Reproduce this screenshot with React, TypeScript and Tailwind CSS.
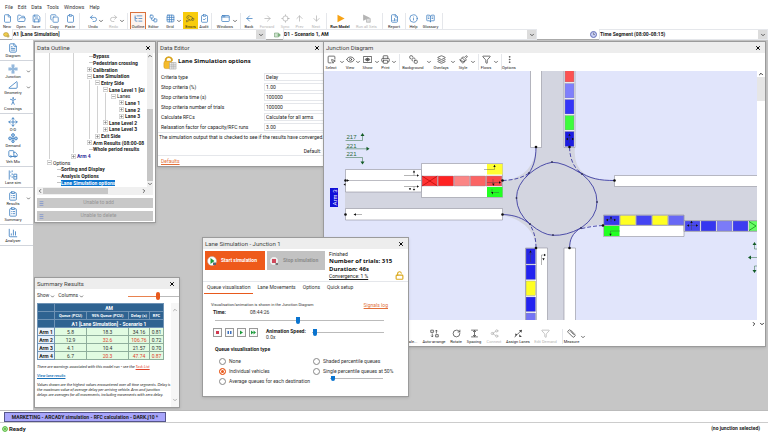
import { useState } from 'react';
import type { ReactNode } from 'react';
import {
  AppWindow, ArrowDown, ArrowLeft, ArrowRight, ArrowUp, BookOpenText, ChartColumn, ChevronDown, ChevronLeft,
  ChevronRight, ChevronUp, ClipboardCheck, ClipboardList, Clipboard, Copy, Eye, FileText, File, Filter, FolderOpen,
  Grid3x3, Info, Layers, ListTree, Locate, LockOpen, Paintbrush, Printer, Redo2, RotateCw, Ruler,
  Save, Share2, SquareMousePointer, SquareStack, TriangleRight, Truck, Undo2, X, EllipsisVertical,
  Cctv, FileChartColumn, PersonStanding, Move, Workflow,
} from 'lucide-react';

type Icon = React.ComponentType<{ className?: string; strokeWidth?: number }>;

interface Tool {
  label: string;
  icon: Icon;
  w: string;
  color?: string;
  chevron?: boolean;
  sep?: boolean;
  off?: boolean;
  box?: string;
  bold?: boolean;
}

const RunIcon: Icon = ({ className }) => (
  <svg viewBox="0 0 24 24" className={className}><path d="M4 2 23 12 4 22Z" fill="currentColor" /></svg>
);

const RunAllIcon: Icon = ({ className }) => (
  <svg viewBox="0 0 24 24" className={className}>
    <path d="M3 1 21 10 3 18Z" fill="currentColor" />
    <path d="M12 12h10v10H12z" fill="#ddd" stroke="currentColor" strokeWidth="2" />
  </svg>
);

const ShowIcon: Icon = ({ className }) => (
  <svg viewBox="0 0 24 24" className={className} fill="none" stroke="currentColor" strokeWidth="2">
    <path d="M1 4h22v16H1zM5 12q7-8 14 0q-7 8-14 0z" />
    <circle cx="12" cy="12" r="2.500" fill="currentColor" />
  </svg>
);

const SpacingIcon: Icon = ({ className }) => (
  <svg viewBox="0 0 24 24" className={className} fill="none" stroke="currentColor" strokeWidth="2">
    <path d="M3 3h18M3 21h18M12 4v16M8 8l4-4 4 4M8 16l4 4 4-4" />
  </svg>
);

const ArrangeIcon: Icon = ({ className }) => (
  <svg viewBox="0 0 24 24" className={className} fill="none" stroke="currentColor" strokeWidth="2">
    <path d="M2 3h7v6H2zM15 15h7v6h-7zM17 12V3M14 6l3-3 3 3M6 12v9M3 18l3 3 3-3" />
  </svg>
);

const AssignIcon: Icon = ({ className }) => (
  <svg viewBox="0 0 24 24" className={className} fill="none" stroke="currentColor" strokeWidth="2">
    <path d="M2 22C6 14 12 14 20 3" />
    <path d="M13 4l8-2-1 8zM14 14l7 7h-7zM3 12l6 2-5 5z" fill="currentColor" stroke="none" />
  </svg>
);

const JunctionIcon: Icon = ({ className }) => (
  <svg viewBox="0 0 24 24" className={className} fill="none" stroke="currentColor" strokeWidth="2">
    <circle cx="12" cy="12" r="3" />
    <path d="M10 8V1M14 8V1M10 16v7M14 16v7M8 10H1M8 14H1M16 10h7M16 14h7" />
  </svg>
);

const DemandIcon: Icon = ({ className }) => (
  <svg viewBox="0 0 24 24" className={className} fill="#a9cbec" stroke="currentColor" strokeWidth="2">
    <circle cx="12" cy="5" r="3.500" /><circle cx="5" cy="13" r="3.500" /><circle cx="19" cy="13" r="3.500" /><circle cx="12" cy="20" r="3" />
    <path d="M12 9v8M8 13h8" />
  </svg>
);

const LaneSimIcon: Icon = ({ className }) => (
  <svg viewBox="0 0 24 24" className={className} fill="none" stroke="currentColor" strokeWidth="2">
    <path d="M3 23V1M10 1v4M10 8v4M10 15v4M14 10h7v12h-7zM14 16h7" />
    <path d="M5 3h3v4H5zM5 12h3v4H5z" fill="#a9cbec" stroke="none" />
  </svg>
);

const NoIcon: Icon = ({ className }) => <span className={className} />;

const mainTools: Tool[] = [
  { label: 'New', icon: File, w: 'w-3.5' },
  { label: 'Open', icon: FolderOpen, w: 'w-3.5' },
  { label: 'Save', icon: Save, w: 'w-4', sep: true },
  { label: 'Copy', icon: Copy, w: 'w-[15px]' },
  { label: 'Paste', icon: Clipboard, w: 'w-4', sep: true },
  { label: 'Undo', icon: Undo2, w: 'ml-2 w-2', chevron: true },
  { label: 'Redo', icon: Redo2, w: 'ml-1 w-[9px]', chevron: true, sep: true, off: true },
  { label: 'Outline', icon: ListTree, w: 'ml-px w-4', box: 'border border-[#d9713c] bg-[#fdf3ee]' },
  { label: 'Editor', icon: Workflow, w: 'w-[15px]' },
  { label: 'Grid', icon: Grid3x3, w: 'ml-1 w-2.5', chevron: true },
  { label: 'Errors', icon: Cctv, w: 'w-[15px]', color: 'text-[#6b6436]', box: 'bg-[#f8cc0c]' },
  { label: 'Audit', icon: ClipboardCheck, w: 'w-3', sep: true },
  { label: 'Windows', icon: AppWindow, w: 'ml-1.5 w-3', chevron: true, sep: true },
  { label: 'Back', icon: ArrowLeft, w: 'w-3.5' },
  { label: 'Forward', icon: ArrowRight, w: 'w-[22px]', off: true },
  { label: 'Sync', icon: Locate, w: 'w-3.5', off: true },
  { label: 'Prev', icon: ArrowUp, w: 'w-[15px]', off: true },
  { label: 'Next', icon: ArrowDown, w: 'w-[18px]', off: true, sep: true },
  { label: 'Run Model', icon: RunIcon, w: 'w-6', color: 'text-[#f7a316]', bold: true },
  { label: 'Run all Sets', icon: RunAllIcon, w: 'w-[29px]', off: true, sep: true },
  { label: 'Report', icon: FileChartColumn, w: 'w-5', sep: true },
  { label: 'Help', icon: Info, w: 'w-[13px]' },
  { label: 'Glossary', icon: BookOpenText, w: 'w-[21px]', sep: true },
];

const diagramTools: Tool[] = [
  { label: 'Select', icon: SquareMousePointer, w: 'w-3.5', chevron: true },
  { label: 'View', icon: Eye, w: 'w-2', chevron: true },
  { label: 'Show', icon: ShowIcon, w: 'w-[11px]', chevron: true },
  { label: 'Print', icon: Printer, w: 'w-[9px]', chevron: true, sep: true },
  { label: 'Background', icon: SquareStack, w: 'w-6', chevron: true },
  { label: 'Overlays', icon: Layers, w: 'w-4', chevron: true },
  { label: 'Style', icon: Paintbrush, w: 'w-3', chevron: true, sep: true },
  { label: 'Flows', icon: Filter, w: 'w-3', chevron: true, sep: true },
  { label: 'Options', icon: EllipsisVertical, w: 'w-3' },
];

const arrangeTools: Tool[] = [
  { label: 'Change Scale...', icon: NoIcon, w: 'w-[37px]' },
  { label: 'Auto-arrange', icon: ArrangeIcon, w: 'w-6' },
  { label: 'Rotate', icon: RotateCw, w: 'w-5' },
  { label: 'Spacing', icon: SpacingIcon, w: 'w-4' },
  { label: 'Connect', icon: Share2, w: 'w-6', off: true },
  { label: 'Assign Lanes', icon: AssignIcon, w: 'w-6' },
  { label: 'Edit Demand', icon: Filter, w: 'w-[31px]', off: true, sep: true },
  { label: 'Measure', icon: Ruler, w: 'w-[15px]', chevron: true },
];

const sideSections: { label: string; icon: Icon; chevron?: boolean }[][] = [
  [{ label: 'Diagram', icon: FileText }],
  [
    { label: 'Junction', icon: JunctionIcon, chevron: true },
    { label: 'Geometry', icon: TriangleRight, chevron: true },
    { label: 'Crossings', icon: PersonStanding },
  ],
  [
    { label: 'O-D', icon: Move },
    { label: 'Demand', icon: DemandIcon },
    { label: 'Veh Mix', icon: Truck },
  ],
  [{ label: 'Lane sim', icon: LaneSimIcon }],
  [
    { label: 'Results', icon: ClipboardList, chevron: true },
    { label: 'Summary', icon: ClipboardList },
  ],
  [{ label: 'Analyser', icon: ChartColumn }],
];

// guides: one character per indent level, "|" continues a branch line
const tree: { guides: string; node: '+' | '-' | 'L'; label: string; look?: string }[] = [
  { guides: '|  | ', node: 'L', label: 'Bypass' },
  { guides: '|  | ', node: 'L', label: 'Pedestrian crossing' },
  { guides: '|  | ', node: '+', label: 'Calibration' },
  { guides: '|  | ', node: '-', label: 'Lane Simulation' },
  { guides: '|  | |', node: '-', label: 'Entry Side' },
  { guides: '|  | ||', node: '-', label: 'Lane Level 1 [Gi' },
  { guides: '|  | |||', node: '-', label: 'Lanes', look: 'font-normal' },
  { guides: '|  | ||| ', node: '+', label: 'Lane 1' },
  { guides: '|  | ||| ', node: '+', label: 'Lane 2' },
  { guides: '|  | ||| ', node: '+', label: 'Lane 3' },
  { guides: '|  | ||', node: '+', label: 'Lane Level 2' },
  { guides: '|  | ||', node: '+', label: 'Lane Level 3' },
  { guides: '|  | |', node: '+', label: 'Exit Side' },
  { guides: '|  | ', node: '+', label: 'Arm Results (08:00-08' },
  { guides: '|  | ', node: 'L', label: 'Whole period results' },
  { guides: '|  ', node: '+', label: 'Arm 4', look: 'font-bold text-[#2a2a9a]' },
  { guides: '', node: '-', label: 'Options', look: 'font-normal' },
  { guides: ' ', node: 'L', label: 'Sorting and Display' },
  { guides: ' ', node: 'L', label: 'Analysis Options' },
  { guides: ' ', node: 'L', label: 'Lane Simulation options', look: 'font-bold bg-[#0a74cf] text-white' },
];

const criteria = [
  { id: 'type', label: 'Criteria type', value: 'Delay' },
  { id: 'pct', label: 'Stop criteria (%)', value: '1.00' },
  { id: 'time', label: 'Stop criteria time (s)', value: '100000' },
  { id: 'trials', label: 'Stop criteria number of trials', value: '100000' },
  { id: 'rfc', label: 'Calculate RFCs', value: 'Calculate for all arms' },
  { id: 'relax', label: 'Relaxation factor for capacity/RFC runs', value: '3.00' },
];

const results = [
  { arm: 'Arm 1', cells: ['5.8', '18.3', '34.16', '0.81'], red: [] as number[] },
  { arm: 'Arm 2', cells: ['12.9', '32.6', '106.76', '0.72'], red: [1, 2] },
  { arm: 'Arm 3', cells: ['4.1', '10.4', '21.57', '0.70'], red: [] },
  { arm: 'Arm 4', cells: ['6.7', '20.3', '47.74', '0.87'], red: [1, 2, 3] },
];

const tabs = ['Queue visualisation', 'Lane Movements', 'Options', 'Quick setup'];

function Sep() {
  return <span className="mx-px my-px w-px shrink-0 self-stretch bg-gray-200" />;
}

function ToolStrip({ tools, color }: { tools: Tool[]; color: string }) {
  return (
    <>
      {tools.map(t => (
        <div key={t.label} className="contents">
          <button className={`flex shrink-0 flex-col items-center justify-center gap-px ${t.w} ${t.box || ''} ${t.off ? 'text-[#b4b4b4]' : t.color || color}`}>
            <t.icon className="h-[9px] w-[9px] shrink-0" strokeWidth={2} />
            <span className={`text-[4px] leading-[5px] whitespace-nowrap ${t.bold ? 'font-bold' : ''} ${t.off ? '' : 'text-[#222]'}`}>{t.label}</span>
          </button>
          {t.chevron && (
            <button aria-label={`${t.label} menu`} className="flex w-2 shrink-0 items-center justify-center text-[#444]">
              <ChevronDown className="h-[6px] w-[6px]" strokeWidth={3} />
            </button>
          )}
          {t.sep && <Sep />}
        </div>
      ))}
    </>
  );
}

function Window({ title, place, children }: { title: string; place: string; children: ReactNode }) {
  return (
    <section className={`absolute flex flex-col border border-[#9b9b9b] bg-white shadow-sm ${place}`}>
      <header className="flex h-[11px] shrink-0 items-center justify-between bg-[#ededed] pr-1 pl-[2px]">
        <h2 className="text-[6px] leading-[8px] text-[#444]">{title}</h2>
        <button aria-label={`Close ${title}`} className="text-black"><X className="h-[6px] w-[6px]" strokeWidth={4} /></button>
      </header>
      {children}
    </section>
  );
}

function Picker({ label, value, icon, grow }: { label: string; value: string; icon: ReactNode; grow: string }) {
  return (
    <div className={`flex items-center ${grow}`}>
      <span className="flex w-3 shrink-0 justify-center">{icon}</span>
      <div className="relative flex-1 border border-gray-200">
        <select aria-label={label} className="block h-[9px] w-full appearance-none bg-white text-[5px] leading-[9px] font-bold text-[#222]">
          <option>{value}</option>
        </select>
        <span className="pointer-events-none absolute inset-y-0 right-0 flex w-[9px] items-center justify-center bg-[#dcdcdc]">
          <ChevronDown className="h-[6px] w-[6px]" strokeWidth={3} />
        </span>
      </div>
    </div>
  );
}

function Outline() {
  return (
    <Window title="Data Outline" place="top-px left-px h-[182px] w-[122px]">
      <div className="flex min-h-0 flex-1 flex-col px-[2px]">
        <div className="flex h-[134px]">
          <ul className="grid h-[133px] min-w-0 flex-1 auto-rows-fr pl-2">
            {tree.map(r => (
              <li key={r.label} className="flex items-center text-[5px] leading-[6px] whitespace-nowrap text-[#222]">
                {r.guides.split('').map((g, i) => (
                  <span key={i} className="flex w-2 shrink-0 justify-center self-stretch">
                    {g === '|' && <span className="w-px bg-[#d2d2d2]" />}
                  </span>
                ))}
                <span className="flex w-2 shrink-0 items-center justify-center">
                  {r.node === 'L' ? (
                    <span className="ml-1 h-px w-1 bg-[#c4c4c4]" />
                  ) : (
                    <svg viewBox="0 0 9 9" className="h-[5px] w-[5px]" fill="#fff" stroke="#a2a2a2">
                      <path d="M.5 .5h8v8h-8z" />
                      <path d={r.node === '+' ? 'M2 4.5h5M4.5 2v5' : 'M2 4.5h5'} stroke="#666" />
                    </svg>
                  )}
                </span>
                <span className={r.look || 'font-bold'}>{r.label}</span>
              </li>
            ))}
          </ul>
          <div className="flex w-[6px] flex-col items-center bg-[#f0f0f0] text-[#444]">
            <ChevronUp className="h-[6px] w-[6px]" strokeWidth={3} />
            <span className="mt-auto h-[72px] w-full bg-[#c6c6c6]" />
            <ChevronDown className="h-[6px] w-[6px]" strokeWidth={3} />
          </div>
        </div>
        <div className="flex h-2 items-center bg-[#f0f0f0] pr-[6px]">
          <ChevronLeft className="h-[6px] w-[6px]" strokeWidth={3} />
          <span className="h-[6px] w-[65px] bg-[#c6c6c6]" />
          <ChevronRight className="ml-auto h-[6px] w-[6px]" strokeWidth={3} />
        </div>
        {['Unable to add', 'Unable to delete'].map(t => (
          <button key={t} disabled className="mt-[3px] flex h-[10px] items-center bg-[#c8c8c8] text-[5px] text-[#949494]">
            <svg viewBox="0 0 8 8" className="ml-0.5 h-[5px] w-[5px]" fill="none" stroke="#6a86cf"><path d="M1 1h6M1 4h6M1 7h6" /></svg>
            <span className="flex-1 text-center">{t}</span>
          </button>
        ))}
      </div>
    </Window>
  );
}

function Editor() {
  return (
    <Window title="Data Editor" place="top-px left-[124px] h-[126px] w-[168px]">
      <div className="flex min-h-0 flex-1 flex-col text-[5px] leading-[6px] text-[#222]">
        <div className="flex h-[19px] items-center gap-px pl-1">
          <svg viewBox="0 0 32 32" className="h-[15px] w-[15px]">
            <path d="M8 16V9a7 7 0 0 1 13 0v4" fill="none" stroke="#d9a520" strokeWidth="4" />
            <rect x="4" y="13" width="18" height="16" rx="4" fill="#f5bb2b" stroke="#c98e12" />
            <path d="M16 16h14v14H16z" fill="#eee" stroke="#999" />
            <path d="M16 21h14M16 25h14M21 16v14M25 16v14" stroke="#999" />
          </svg>
          <h3 className="pb-1 font-['Open_Sans',sans-serif] text-[6px] font-bold text-[#111]">Lane Simulation options</h3>
        </div>
        <form className="flex flex-col">
          {criteria.map(c => (
            <div key={c.id} className="flex h-2.5 items-center pl-[3px]">
              <label htmlFor={c.id} className="w-[103px] whitespace-nowrap">{c.label}</label>
              {c.id === 'type' || c.id === 'rfc' ? (
                <select id={c.id} className="h-2 min-w-0 flex-1 appearance-none border border-r-0 border-gray-200 pl-px leading-[6px]">
                  <option>{c.value}</option>
                </select>
              ) : (
                <input id={c.id} defaultValue={c.value} className="h-2 min-w-0 flex-1 border border-r-0 border-gray-200 pl-px leading-[6px]" />
              )}
            </div>
          ))}
        </form>
        <p className="border-t border-gray-200 pt-px pl-px whitespace-nowrap">The simulation output that is checked to see if the results have converged.</p>
        <p className="mt-auto border-b border-gray-200 pr-[3px] text-right leading-[7px]">Default:</p>
        <a href="#defaults" className="px-[3px] py-0.5 text-[#e2703a] underline">Defaults</a>
      </div>
    </Window>
  );
}

function Car({ x, y, w, h, fill }: { x: number; y: number; w: number; h: number; fill: string }) {
  return <rect x={x} y={y} width={w} height={h} fill={fill} stroke="#8c8ca0" strokeWidth="0.4" />;
}

function Diagram() {
  const nodes = [[345.5, 180.5], [502.5, 180.5], [345.5, 214.5], [502.5, 214.5], [536, 147], [569.5, 147], [614.5, 180.5], [603, 225.5], [536, 248], [569.5, 248]];
  return (
    <svg viewBox="324 71 433 249" preserveAspectRatio="xMinYMin slice" className="h-[249px] min-w-0 flex-1 bg-[#e1e5fb]" fontFamily="Liberation Sans, sans-serif">
      <path d="M530 71H575V147Q573 166 585 174Q597 181 614 181H757V231H684V225H603Q570 224 570 248V320H525V248H536Q534 222 502 215H345V181H502Q534 177 536 147H530Z" fill="#d3d5e0" />

      <g fill="#fff" stroke="#8e8e9a" strokeWidth="0.6">
        <path d="M530.5 70V147.500H541.500V70M564 70V147.500H575V70" />
        <path d="M345.500 169.500H421.500V192H345.500ZM345.500 208.500H502.500V220H345.500Z" />
        <path d="M421.500 163.500H502.500V197.500H421.500ZM345.500 180.500H421.500" />
        <path d="M758 175.500H614.500V186.500H758M603.500 215H684V236.500H603.500ZM603.500 225.500H684M758 220.500H684V231.500H758" />
        <path d="M525.500 321V248H547.500V321M536.500 248V321M564 321V248H575.500V321" />
      </g>

      {['#f33', '#f22', '#fb8585', '#fb6464', '#f94a4a'].map((c, i) => <Car key={i} x={422 + i * 16.1} y={176} w={15.5} h={10} fill={c} />)}
      <path d="M422 176l15.500 10M422 186l15.500-10" stroke="#a00" strokeWidth="0.6" />
      <rect x="487" y="164" width="15.500" height="10.500" fill="#ff3" />
      <rect x="487" y="187" width="15.500" height="10" fill="#2f2" />

      <Car x={565} y={70} w={9} h={12} fill="#fc5252" />
      <Car x={565} y={83.5} w={9} h={14.5} fill="#7f7ffc" />
      <Car x={565} y={99.5} w={9} h={14.5} fill="#3535f8" />
      <Car x={565} y={115.5} w={9} h={14.500} fill="#3dfc3d" />
      <Car x={565} y={131.5} w={9} h={15} fill="#1c1ce0" />

      {['#3838ec', '#ff2', '#4444f2', '#ff2', '#6868f5'].map((c, i) => <Car key={i} x={604 + i * 16.1} y={215.5} w={15.5} h={9.5} fill={c} />)}
      <rect x="604" y="226" width="15.500" height="10" fill="#2f2" />
      {['#4848f0', '#3636f0', '#7b7bf8', '#3d3df0', '#6f6'].map((c, i) => <Car key={i} x={685 + i * 16} y={221} w={15} h={10} fill={c} />)}
      <path d="M749 221.500l7 4.500-7 4.500" fill="none" stroke="#1a8a1a" strokeWidth="0.8" />

      <Car x={526} y={248.5} w={9.5} h={15.5} fill="#2626e8" />
      <Car x={526} y={265} w={9.5} h={14.5} fill="#2222f0" />
      <Car x={526} y={281} w={9.5} h={14.5} fill="#ff2" />
      <Car x={526} y={297} w={9.5} h={14.5} fill="#2222f0" />
      <Car x={526} y={313} w={9.5} h={10} fill="#7474f4" />

      <g fill="none" stroke="#3c3ca2" strokeWidth="0.9">
        <path d="M552 162.300Q541 164 529 174Q516.500 185 516.500 198Q517 213 530 224Q543 235 553 235.300Q566 236 581 228Q597 217 597 202Q597 186 582 174Q563 162 552 162.300Z" />
        <path d="M536 147C536 160 533 169 526 177M614.500 180.500C600 180.500 590 179 578 171M569.500 248C570 240 571 234 582 227M502.500 214.500C515 215 523 218 531 225" />
        <path d="M502.500 180.500C514 180 522 178 529 173M569.500 147C570 160 574 168 582 174M603 225.500C594 226 588 227 580 229M536 248C536 238 534 231 529 223" strokeDasharray="4 2" />
      </g>
      {[[529, 173], [582, 174], [581, 228], [530, 224], [516.5, 198], [597, 202], [552, 162], [553, 235]].map(([x, y]) => (
        <circle key={`${x}-${y}`} cx={x} cy={y} r="0.9" fill="#33335a" />
      ))}
      {nodes.map(([x, y]) => <circle key={`${x},${y}`} cx={x} cy={y} r="1.3" fill="#111" />)}

      {/* lane movement arrows */}
      <g fill="none" stroke="#444" strokeWidth="0.4">
        <path d="M484 169.500H494.500V166M487 182.500H499M493 179V184M492 189V192.500H499M404 175.500H418M414 175.500V171M410 188V190M404 186.500H418M414 186.500V190" />
        <path d="M355 214.500H362M349 180.500H346M569.500 135V143M566 139H573M606 219.500H616M611 217.500V222M610.500 234V231H620M688 225.500H698M691.500 221V230M530.500 251V262M528 254H533M541.500 265V255H545" />
      </g>
      <g fill="#111">
        <path d="M494.500 164.800l1.200 2.200h-2.400zM492 183.800l1.700 2 .8-2.400zM499 181.300v2.400l2-1.200zM491 192l2 2.500v-2.500zM414 170.200l1.200 2.200h-2.400zM417 174.300v2.400l2-1.200zM410 190.300l1.200-2h-2.400zM414 190.800l1.200-1.800h-2.400zM353.500 214.500l2.500-1.300v2.600zM343.500 184.500l2-1.200v2.400zM417 185.300v2.400l2-1.200zM349 180.500l-2-1.200v2.400z" />
        <path d="M569.500 133.500l1.200 2.200h-2.400zM566 139l2-1.200v2.400zM574 139l-2-1.200v2.400zM611 216.300l1.200 2.200h-2.400zM606 220l2-1.200v2.400zM616 220l-2-1.200v2.400zM610.500 236l1.200-2.200h-2.400zM691.500 220.800l1.200 2.200h-2.400zM687 225.500l2-1.200v2.400zM698 225.500l-2-1.200v2.400zM530.500 250.300l1.200 2.200h-2.400zM546 255l-2-1.200v2.400zM543.500 260.500l1.200-2.200h-2.400z" />
      </g>

      {/* turning counts */}
      <g fill="none" stroke="#2c6a3c" strokeWidth="0.5">
        <path d="M345.500 140.500H362.500V136M345.500 148.800H368M345.500 157.500H362.500V162M754.500 245V249H757M750 257.500H757M754.500 270V266H757" />
      </g>
      <path d="M362.500 133l2 3h-4zM369.500 148.800l-3-2v4zM362.500 164.500l2-3h-4zM754.500 242l2 3h-4zM748 257.500l3-2v4zM754.500 273l2-3h-4z" fill="#135c26" />
      <g fill="#2c6a3c" fontSize="6">
        <text x="346.500" y="139">217</text>
        <text x="346.500" y="147.500">221</text>
        <text x="346.500" y="156">221</text>
      </g>
      <rect x="330" y="188" width="8" height="19" fill="#1010d8" />
      <text transform="translate(336.500 205.500) rotate(-90)" fill="#fff" fontSize="6">Arm 3</text>
    </svg>
  );
}

function DiagramWindow() {
  return (
    <Window title="Junction Diagram" place="top-px right-[2px] left-[290px] h-[306px]">
      <div className="flex h-[18px] shrink-0"><ToolStrip tools={diagramTools} color="text-[#444]" /></div>
      <div className="flex h-[249px] shrink-0">
        <Diagram />
        <div className="flex w-2 shrink-0 flex-col items-center bg-white">
          <ChevronUp className="h-[6px] w-[6px]" strokeWidth={4} />
          <span className="h-6 w-full bg-[#e6e6e6]" />
        </div>
      </div>
      <div className="flex h-2 shrink-0 items-center justify-end gap-0.5">
        <ChevronRight className="h-[6px] w-[6px]" strokeWidth={4} />
        <ChevronDown className="h-[6px] w-[6px]" strokeWidth={4} />
      </div>
      <div className="flex h-[17px] shrink-0 pl-[61px]"><ToolStrip tools={arrangeTools} color="text-[#444]" /></div>
    </Window>
  );
}

const blueRange = 'block h-2 appearance-none bg-[linear-gradient(#bbb,#bbb)] bg-[length:100%_1px] bg-center bg-no-repeat [&::-webkit-slider-thumb]:w-[4px] [&::-webkit-slider-thumb]:appearance-none [&::-webkit-slider-thumb]:rounded-b-[2px] [&::-webkit-slider-thumb]:bg-[#0a74cf]';

function SimulationWindow() {
  const [tab, setTab] = useState(tabs[0]);
  const [mode, setMode] = useState('Individual vehicles');

  const radio = (label: string) => (
    <label key={label} className="flex h-2.5 items-center gap-[3px] whitespace-nowrap">
      <input
        type="radio"
        name="mode"
        checked={mode === label}
        onChange={() => setMode(label)}
        className="h-[7px] w-[7px] appearance-none rounded-full border border-[#888] bg-white checked:border-[#e8591c] checked:bg-[#e8591c] checked:shadow-[inset_0_0_0_1px_#fff]"
      />
      {label}
    </label>
  );

  return (
    <Window title="Lane Simulation - Junction 1" place="top-[197px] left-[169px] h-[160px] w-[207px]">
      <div className="flex h-[33px] border-b border-gray-200 pt-0.5 pr-1 pl-[2px]">
        <button className="flex h-[19px] w-[60px] items-center gap-1 bg-[#ee5a1b] pl-[2px] text-[5px] font-bold text-white">
          <svg viewBox="0 0 20 20" className="h-[10px] w-[10px]">
            <circle cx="10" cy="10" r="9" fill="#fff" stroke="#aaa" />
            <path d="M7 4l8 6-8 6z" fill="#1b9a3a" /><path d="M12 13h6v5h-6z" fill="#567" />
          </svg>
          Start simulation
        </button>
        <button disabled className="ml-0.5 flex h-[19px] w-[58px] items-center gap-1 bg-[#c2c2c2] pl-[2px] text-[5px] font-bold text-[#8c8c8c]">
          <svg viewBox="0 0 20 20" className="h-[10px] w-[10px]">
            <circle cx="10" cy="10" r="9" fill="#eee" stroke="#aaa" />
            <path d="M6 6h8v8H6z" fill="#cf4a5c" /><path d="M13 14h5v4h-5z" fill="#777" />
          </svg>
          Stop simulation
        </button>
        <div className="ml-1 flex-1 text-[5px] leading-[6px] whitespace-nowrap text-[#222]">
          <p>Finished</p>
          <p className="font-['Open_Sans',sans-serif] text-[6px] leading-[8px] font-bold text-[#111]">Number of trials: 315</p>
          <p className="font-['Open_Sans',sans-serif] text-[6px] leading-[8px] font-bold text-[#111]">Duration: 46s</p>
          <p className="underline">Convergence: 1 %</p>
        </div>
        <LockOpen className="mb-px h-[9px] w-[9px] shrink-0 self-end text-[#dba91c]" strokeWidth={3} />
      </div>

      <div role="tablist" className="flex h-3 gap-px pl-px text-[5px] text-[#333]">
        {tabs.map(t => (
          <button key={t} role="tab" aria-selected={t === tab} onClick={() => setTab(t)} className={`border-b px-[3px] ${t === tab ? 'border-[#e8591c]' : 'border-transparent'}`}>{t}</button>
        ))}
      </div>

      <div className="flex flex-col pt-2 pr-5 pl-2 text-[5px] leading-[6px] text-[#333]">
        <div className="flex items-center justify-between">
          <p className="text-[4px]">Visualisation/animation is shown in the Junction Diagram</p>
          <a href="#signals" className="text-[#e2703a] underline">Signals log</a>
        </div>
        <div className="flex h-2 items-center pl-0.5"><label htmlFor="time" className="w-[37px] font-bold text-[#222]">Time:</label>08:44:26</div>
        <input id="time" type="range" defaultValue={49} className={`ml-1 w-[169px] [&::-webkit-slider-thumb]:h-[7px] ${blueRange}`} />
        <div className="mt-1 flex h-3 items-start pr-1 pl-[2px]">
          <div className="flex gap-[3px]">
            {['#d0384f', '#3b6fbf', '#1b9a3a', '#1b9a3a'].map((c, i) => (
              <button key={i} aria-label={['Stop', 'Pause', 'Play', 'Fast forward'][i]} className="flex h-[9px] w-[9px] items-center justify-center border border-[#999] bg-[#fafafa]">
                <svg viewBox="0 0 14 14" className="h-[7px] w-[7px]" fill={c}>
                  <path d={['M4 4h6v6H4z', 'M3 4h3v6H3zM8 4h3v6H8z', 'M4 3l6 4-6 4z', 'M2 3l5 4-5 4zM7 3l5 4-5 4z'][i]} />
                </svg>
              </button>
            ))}
          </div>
          <div className="ml-2 w-[46px]">
            <label htmlFor="speed" className="block font-bold whitespace-nowrap text-[#222]">Animation Speed:</label>
            0.0x
          </div>
          <input id="speed" type="range" defaultValue={2} className={`min-w-0 flex-1 [&::-webkit-slider-thumb]:h-[7px] ${blueRange}`} />
        </div>
        <h3 className="mt-[6px] pl-1 font-bold text-[#222]">Queue visualisation type</h3>
        <div className="mt-1 flex pl-2">
          <div className="w-[94px] shrink-0">{['None', 'Individual vehicles', 'Average queues for each destination'].map(radio)}</div>
          <div className="shrink-0">
            {['Shaded percentile queues', 'Single percentile queues at 50%'].map(radio)}
            <input aria-label="Percentile" type="range" defaultValue={2} className={`-mt-0.5 ml-[17px] w-[53px] [&::-webkit-slider-thumb]:h-[5px] ${blueRange}`} />
          </div>
        </div>
      </div>
    </Window>
  );
}

function SummaryWindow() {
  return (
    <Window title="Summary Results" place="top-[237px] left-px h-[131px] w-[146px]">
      <div className="flex h-[14px] shrink-0 items-center gap-[3px] pl-[2px] text-[5px] text-[#333]">
        <button className="flex items-center gap-px">Show <ChevronDown className="h-[5px] w-[5px]" strokeWidth={3} /></button>
        <button className="flex items-center gap-px">Columns <ChevronDown className="h-[5px] w-[5px]" strokeWidth={3} /></button>
        <input
          aria-label="Table size"
          type="range"
          defaultValue={60}
          className="ml-auto h-2 w-[51px] appearance-none bg-[linear-gradient(90deg,#e8824f_60%,#bbb_60%)] bg-[length:100%_1px] bg-center bg-no-repeat [&::-webkit-slider-thumb]:h-2 [&::-webkit-slider-thumb]:w-[4px] [&::-webkit-slider-thumb]:appearance-none [&::-webkit-slider-thumb]:rounded-sm [&::-webkit-slider-thumb]:bg-[#e8591c]"
        />
      </div>
      <div className="flex min-h-0 flex-1">
        <div className="flex-1 pl-[2px]">
          <table className="w-[126px] table-fixed border-collapse text-center text-[5px] leading-[6px] text-[#333] [&_td]:border [&_td]:border-[#8fae9c] [&_th]:border [&_th]:border-[#6f93b5]">
            <colgroup><col className="w-[17px]" /><col className="w-[32px]" /><col className="w-[42px]" /><col className="w-[21px]" /><col className="w-[14px]" /></colgroup>
            <thead className="bg-[#2f6391] text-[4px] text-white">
              <tr className="h-2"><th /><th colSpan={4} className="text-[5px]">AM</th></tr>
              <tr className="h-2 whitespace-nowrap"><th /><th>Queue (PCU)</th><th>95% Queue (PCU)</th><th>Delay (s)</th><th>RFC</th></tr>
              <tr className="h-2"><th /><th colSpan={4} className="text-[5px]">A1 [Lane Simulation] - Scenario 1</th></tr>
            </thead>
            <tbody>
              {results.map(r => (
                <tr key={r.arm} className="h-2 bg-[#e1fbe1]">
                  <th className="bg-[#e9f1fa] text-[#222]">{r.arm}</th>
                  {r.cells.map((c, i) => <td key={i} className={r.red.includes(i) ? 'text-[#e0442c]' : ''}>{c}</td>)}
                </tr>
              ))}
            </tbody>
          </table>
          <div className="flex flex-col gap-1 pt-[4px] font-[Lato,sans-serif] text-[4px] leading-[5px] text-[#222] italic">
            <p>There are warnings associated with this model run - see the <a href="#tasks" className="text-[#e0442c] underline">Task List</a></p>
            <a href="#lanes" className="font-bold text-[#1a72b8] underline">View lane results</a>
            <p>Values shown are the highest values encountered over all time segments. Delay is the maximum value of average delay per arriving vehicle. Arm and junction delays are averages for all movements, including movements with zero delay.</p>
          </div>
        </div>
        <div className="flex w-2 flex-col items-center justify-between bg-[#f6f6f6] py-1 text-[#999]">
          <ChevronUp className="h-[6px] w-[6px]" strokeWidth={3} />
          <ChevronDown className="h-[6px] w-[6px]" strokeWidth={3} />
        </div>
      </div>
    </Window>
  );
}

export default function App() {
  return (
    <div className="flex min-h-screen flex-col bg-white font-[Roboto,sans-serif] text-[#333]">
      <nav className="flex h-3 items-end gap-[5px] pl-[5px] text-[5px] leading-[9px]">
        {['File', 'Edit', 'Data', 'Tools', 'Windows', 'Help'].map(m => <button key={m}>{m}</button>)}
      </nav>
      <div className="flex h-[18px]"><ToolStrip tools={mainTools} color="text-[#3f7fc0]" /></div>

      <div className="flex h-2.5 border-b border-[#aaa]">
        <Picker
          label="Analysis set"
          value="A1 [Lane Simulation]"
          grow="flex-[266]"
          icon={<svg viewBox="0 0 14 12" className="h-[6px] w-[7px]"><ellipse cx="6" cy="5" rx="5" ry="4" fill="#f0cc4a" stroke="#a98a28" /><circle cx="10" cy="8" r="3" fill="#c9b25a" /></svg>}
        />
        <Picker
          label="Demand set"
          value="D1 - Scenario 1, AM"
          grow="ml-[5px] flex-[266]"
          icon={<svg viewBox="0 0 14 12" className="h-[6px] w-[7px]"><path d="M1 2h8v8H1z" fill="#cfe3cf" stroke="#5b8f5b" /><circle cx="10" cy="6" r="3" fill="#7fb07f" /></svg>}
        />
        <Picker
          label="Time segment"
          value="Time Segment (08:00-08:15)"
          grow="ml-[50px] flex-[181]"
          icon={<svg viewBox="0 0 14 14" className="h-[7px] w-[7px]"><circle cx="7" cy="7" r="6" fill="#c6cdf2" stroke="#6470b8" strokeWidth="2" /><path d="M7 3v4h3" fill="none" stroke="#445" /></svg>}
        />
      </div>

      <div className="flex min-h-[370px] flex-1">
        <aside className="w-[33px] shrink-0 bg-white">
          {sideSections.map((s, i) => (
            <div key={i} className="border-b border-gray-300 py-0.5">
              {s.map(it => (
                <div key={it.label} className="flex h-4 items-center">
                  <button className="flex w-[26px] shrink-0 flex-col items-center text-[#3f7fc0]">
                    <it.icon className="h-[10px] w-[10px]" strokeWidth={2} />
                    <span className="text-[4px] leading-[5px] text-[#222]">{it.label}</span>
                  </button>
                  {it.chevron && <ChevronDown className="h-[5px] w-[5px]" strokeWidth={3} />}
                </div>
              ))}
            </div>
          ))}
        </aside>
        <main className="relative flex-1 overflow-hidden bg-[#c6c6c6]">
          <Outline />
          <Editor />
          <DiagramWindow />
          <SimulationWindow />
          <SummaryWindow />
        </main>
      </div>

      <div className="flex h-3 items-center border-t border-[#bbb] pl-1">
        <button className="h-[10px] w-[162px] border border-[#55558a] bg-[#a8a5fb] text-center text-[5px] leading-[8px] font-bold whitespace-nowrap text-[#222]">MARKETING - ARCADY simulation - RFC calculation - DARK.j10 *</button>
      </div>
      <footer className="flex h-3 items-center justify-between border-t border-[#ccc] pr-2 pl-[2px] text-[5px] font-bold text-[#222]">
        <span className="flex items-center gap-px text-[6px]">
          <svg viewBox="0 0 10 10" className="h-[6px] w-[6px]"><circle cx="5" cy="5" r="4" fill="#bdf0a5" stroke="#3fae2a" strokeWidth="1.500" /><path d="M3 6l2-3 2 3z" fill="#2c8c1c" /></svg>
          Ready
        </span>
        <span>(no junction selected)</span>
      </footer>
    </div>
  );
}
